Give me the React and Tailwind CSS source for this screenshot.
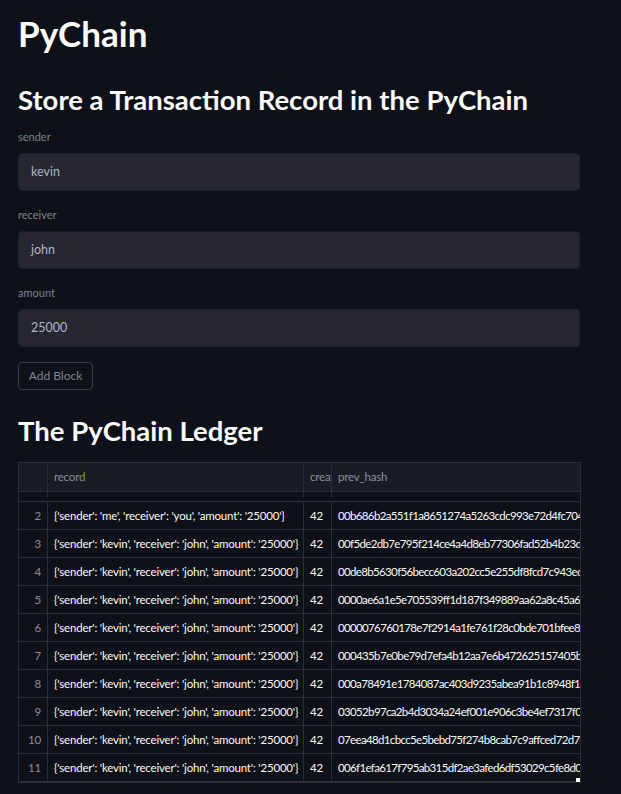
const hashes = [
  "00b686b2a551f1a8651274a5263cdc993e72d4fc704d",
  "00f5de2db7e795f214ce4a4d8eb77306fad52b4b23d7",
  "00de8b5630f56becc603a202cc5e255df8fcd7c943edb",
  "0000ae6a1e5e705539ff1d187f349889aa62a8c45a63b",
  "0000076760178e7f2914a1fe761f28c0bde701bfee828",
  "000435b7e0be79d7efa4b12aa7e6b472625157405b4b",
  "000a78491e1784087ac403d9235abea91b1c8948f1d1",
  "03052b97ca2b4d3034a24ef001e906c3be4ef7317f01f",
  "07eea48d1cbcc5e5bebd75f274b8cab7c9affced72d72",
  "006f1efa617f795ab315df2ae3afed6df53029c5fe8d0c",
];

const kevin = "{'sender': 'kevin', 'receiver': 'john', 'amount': '25000'}";

// row 1 is scrolled mostly out of view under the header
const rows = [
  { i: 1, rec: kevin, hash: "0000000000000000000000000000000000000000000000" },
  { i: 2, rec: "{'sender': 'me', 'receiver': 'you', 'amount': '25000'}", hash: hashes[0] },
  ...hashes.slice(1).map((h, k) => ({ i: k + 3, rec: kevin, hash: h })),
];

const Field = ({ label, value }) => (
  <div className="flex flex-col">
    <div className="text-[11px] text-[#7d818c] h-[16px] leading-[16px]">{label}</div>
    <div className="mt-[8px] h-[38px] rounded-[4px] bg-[#262730] border border-[#1e2028] flex items-center px-[12px] text-[12.5px] text-[#adb5c6]">
      {value}
    </div>
  </div>
);

export default function App() {
  return (
    <div
      className="min-h-screen bg-[#0e1117] text-[#fafafa] px-[18px] pt-[11px]"
      style={{ fontFamily: "Lato, 'Liberation Sans', sans-serif" }}
    >
      <h1 className="text-[35px] font-bold leading-[44px]">PyChain</h1>
      <h2 className="mt-[27px] text-[27.5px] font-bold leading-[36px]">
        Store a Transaction Record in the PyChain
      </h2>
      <div className="w-[562px] mt-[11px] flex flex-col gap-[16px]">
        <Field label="sender" value="kevin" />
        <Field label="receiver" value="john" />
        <Field label="amount" value="25000" />
      </div>
      <button className="mt-[15px] h-[28px] w-[75px] rounded-[4px] border border-[#3a3d47] text-[12px] text-[#80848f]">
        Add Block
      </button>
      <h2 className="mt-[23px] text-[27.5px] font-bold leading-[36px]">The PyChain Ledger</h2>
      <div className="relative mt-[13px] w-[563px] border border-[#2b2e37] overflow-hidden text-[11.5px] tracking-[-0.2px]">
        <div className="flex h-[29px] bg-[#1a1c24] border-b border-[#2b2e37] text-[#8a8e99] whitespace-nowrap">
          <div className="w-[29px] shrink-0 border-r border-[#2b2e37]" />
          <div className="w-[256px] shrink-0 border-r border-[#2b2e37] px-[6px] flex items-center">record</div>
          <div className="w-[28px] shrink-0 border-r border-[#2b2e37] pl-[6px] flex items-center overflow-hidden">created</div>
          <div className="flex-1 px-[6px] flex items-center">prev_hash</div>
        </div>
        <div className="h-[290px] overflow-hidden">
          <div className="-mt-[18px]">
            {rows.map((r) => (
              <div
                key={r.i}
                className={`flex h-[28px] border-b border-[#2b2e37] whitespace-nowrap ${r.i === 1 ? "pb-[4px]" : ""}`}
              >
                <div className="w-[29px] shrink-0 border-r border-[#2b2e37] pr-[6px] flex items-center justify-end text-[#8a8e99]">
                  {r.i}
                </div>
                <div className="w-[256px] shrink-0 border-r border-[#2b2e37] px-[6px] flex items-center overflow-hidden">
                  {r.rec}
                </div>
                <div className="w-[28px] shrink-0 border-r border-[#2b2e37] px-[6px] flex items-center">42</div>
                <div className="flex-1 min-w-0 px-[6px] flex items-center overflow-hidden tracking-[-0.65px]">
                  {r.hash}
                </div>
              </div>
            ))}
          </div>
        </div>
        <div className="absolute right-0 bottom-0 w-[4px] h-[4px] bg-white" />
      </div>
    </div>
  );
}
